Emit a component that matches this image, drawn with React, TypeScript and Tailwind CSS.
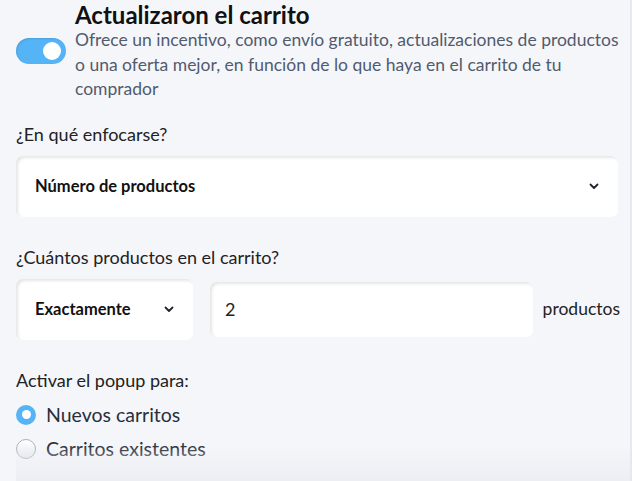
import React from "react";

const Chevron = () => (
  <svg width="12" height="12" viewBox="0 0 12 12" fill="none">
    <path d="M2.5 4.5 L6 8 L9.5 4.5" stroke="#1f2430" strokeWidth="1.8" strokeLinecap="round" strokeLinejoin="round" />
  </svg>
);

export default function App() {
  return (
    <div
      className="relative w-[632px] h-[481px] overflow-hidden bg-[#f5f6fa] border-r-2 border-[#e6e8ee]"
      style={{ fontFamily: "Lato, 'Noto Sans', sans-serif" }}
    >
      <div className="pl-4 pr-[10px] pt-[1px]">
        <div className="flex -mr-[8px]">
          <div className="w-[59px] shrink-0 pt-[37px]">
            <div className="relative w-[50px] h-[26px] rounded-full bg-[#55b4f6] shadow-[inset_1px_1px_2px_rgba(0,0,0,0.12)]">
              <div className="absolute right-[5px] top-[4px] w-[18px] h-[18px] rounded-full bg-white" />
            </div>
          </div>
          <div>
            <div className="text-[24px] leading-[28px] font-bold text-[#111]">Actualizaron el carrito</div>
            <p className="text-[17.5px] leading-[24.5px] text-[#515b6e] -mt-[1px]">
              Ofrece un incentivo, como envío gratuito, actualizaciones de productos o una oferta mejor, en función de lo que haya en el carrito de tu comprador
            </p>
          </div>
        </div>

        <div className="mt-[20px] text-[18px] leading-[24px] text-[#222]">¿En qué enfocarse?</div>
        <div className="mt-[10px] mr-[2px] h-[61px] rounded-[7px] bg-white shadow-[inset_2px_2px_3px_rgba(0,0,0,0.10)] flex items-center justify-between pl-[19px] pr-[18px]">
          <span className="text-[16.5px] font-bold text-[#111]">Número de productos</span>
          <Chevron />
        </div>

        <div className="mt-[28px] text-[18px] leading-[24px] text-[#222]">¿Cuántos productos en el carrito?</div>
        <div className="mt-[10px] flex items-center">
          <div className="w-[177px] h-[61px] rounded-[7px] bg-white shadow-[inset_2px_2px_3px_rgba(0,0,0,0.10)] flex items-center justify-between pl-[19px] pr-[18px]">
            <span className="text-[16.5px] font-bold text-[#111]">Exactamente</span>
            <Chevron />
          </div>
          <div className="ml-[17px] w-[323px] h-[55px] rounded-[7px] bg-white shadow-[inset_2px_2px_3px_rgba(0,0,0,0.10)] flex items-center pl-[15px] text-[18px] text-[#222]">
            2
          </div>
          <span className="ml-[10px] text-[17.5px] text-[#222]">productos</span>
        </div>

        <div className="mt-[28px] text-[18px] leading-[24px] text-[#222]">Activar el popup para:</div>
        <div className="mt-[11px] flex items-center h-[24px]">
          <div className="w-[20px] h-[20px] rounded-full bg-[#55b4f6] flex items-center justify-center">
            <div className="w-[9px] h-[9px] rounded-full bg-white" />
          </div>
          <span className="ml-[10px] text-[19.5px] text-[#2a2f3a]">Nuevos carritos</span>
        </div>
        <div className="mt-[10px] flex items-center h-[24px]">
          <div className="w-[20px] h-[20px] rounded-full bg-gradient-to-b from-white to-[#e4e7ee] border border-[#aab0bc]" />
          <span className="ml-[10px] text-[19.5px] text-[#2a2f3a]">Carritos existentes</span>
        </div>
      </div>
      <div className="absolute left-4 right-0 bottom-0 h-[36px] bg-gradient-to-b from-[#f5f6fa]/0 to-[#eceef3]" />
    </div>
  );
}
